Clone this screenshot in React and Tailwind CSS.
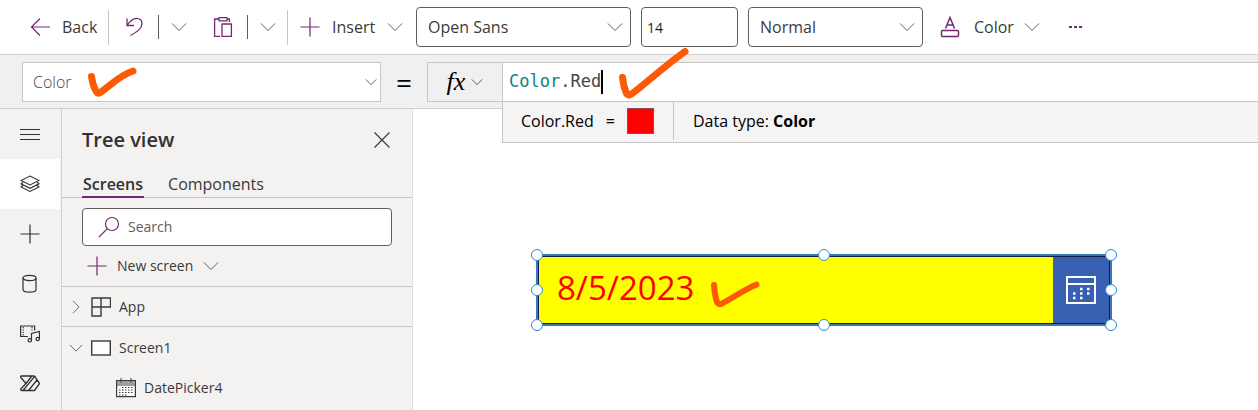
import React from 'react';
import clsx from 'clsx';

const Icon = ({ className, children, viewBox = '0 0 20 20' }) => (
  <svg viewBox={viewBox} className={clsx('shrink-0', className)} fill="none" stroke="currentColor" aria-hidden="true">
    {children}
  </svg>
);

const Chevron = ({ className = 'h-4 w-4 text-[#605e5c]' }) => (
  <Icon viewBox="0 0 16 16" className={className}>
    <path d="M1 4.500l7 7 7-7" />
  </Icon>
);

const PlusIcon = ({ className }) => (
  <Icon className={className}>
    <path d="M0.5 10h19M10 0.5v19" strokeWidth="1.2" />
  </Icon>
);

const Tick = ({ className, viewBox, d, width }) => (
  <svg viewBox={viewBox} className={clsx('pointer-events-none absolute z-20', className)} fill="none" aria-hidden="true">
    <path d={d} stroke="#fd5a05" strokeWidth={width} strokeLinecap="round" strokeLinejoin="round" />
  </svg>
);

const MenuIcon = () => (
  <Icon className="h-5 w-5">
    <path d="M0 5.500h20M0 10.500h20M0 15.500h20" />
  </Icon>
);

const LayersIcon = () => (
  <Icon className="h-5 w-5">
    <path d="M10 2l9 4.5-9 4.5-9-4.5z" strokeWidth="1.1" />
    <path d="M3 8.2L1 9.8l9 4.500 9-4.500-2-1.600M3 11.500L1 13l9 4.500 9-4.500-2-1.500" strokeWidth="1.1" />
  </Icon>
);

const DataIcon = () => (
  <Icon className="h-5 w-5">
    <ellipse cx="9.5" cy="4" rx="6.5" ry="2.6" strokeWidth="1.2" />
    <path d="M3 4v11.500c0 1.500 2.900 2.600 6.500 2.600s6.500-1.100 6.500-2.600V4" strokeWidth="1.2" />
  </Icon>
);

const MediaIcon = () => (
  <Icon className="h-5 w-5">
    <path d="M8 12.500H.6V2h14v4.500" strokeWidth="1.2" />
    <path d="M3.200 3v9M12 3v4" strokeDasharray="1.200 1.200" strokeWidth="1.2" />
    <path d="M11.500 16V9.500l8-2v7.300" strokeWidth="1.2" />
    <circle cx="9.800" cy="16.300" r="1.700" strokeWidth="1.2" />
    <circle cx="17.700" cy="15" r="1.700" strokeWidth="1.2" />
  </Icon>
);

const FlowIcon = () => (
  <Icon className="h-5 w-5">
    <path
      d="M1.500 2h12.200c.8 0 1 .3 1.400.8l4.400 6.700-5 7H1.800c-1.200 0-1.400-1-.8-1.800L6 9.500.9 3.500C.4 2.800.6 2 1.500 2zM6 9.500L11.500 2.500M3 16.500L14.300 2.800M8.500 16.500l8.500-10.500"
      strokeWidth="1.3"
      strokeLinejoin="round"
    />
  </Icon>
);

const railItems = [
  { label: 'Menu', icon: <MenuIcon /> },
  { label: 'Tree view', icon: <LayersIcon />, active: true },
  { label: 'Insert', icon: <PlusIcon className="h-5 w-5" /> },
  { label: 'Data', icon: <DataIcon /> },
  { label: 'Media', icon: <MediaIcon /> },
  { label: 'Power Automate', icon: <FlowIcon /> },
];

const Toolbar = () => (
  <header className="flex h-[55px] items-center border-b border-[#d2d0ce] bg-white text-base text-[#3b3a39]">
    <button className="flex h-9 w-[108px] shrink-0 items-center gap-3 pl-[30px]">
      <Icon className="h-5 w-5 text-[#742774]">
        <path d="M20 10H1.500M10 1.500L1.500 10l8.500 8.500" strokeWidth="1.2" />
      </Icon>
      Back
    </button>
    <div className="flex h-[35px] w-[180px] shrink-0 items-center border-x border-[#c8c6c4]">
      <button aria-label="Undo" className="flex w-[49px] justify-center">
        <Icon className="h-5 w-5 text-[#742774]">
          <path d="M3 1.500v7h7M3.300 8.200C6 4 9 1.300 12.500 1.300c3.300 0 5.500 2.300 5.500 5.200 0 5-4.500 8-11.500 12" strokeWidth="1.3" />
        </Icon>
      </button>
      <button aria-label="Undo options" className="flex h-6 w-10 items-center justify-center border-l border-[#605e5c]">
        <Chevron />
      </button>
      <button aria-label="Paste" className="flex w-[49px] justify-center">
        <Icon className="h-[22px] w-5 text-[#742774]" viewBox="0 0 20 22">
          <path d="M6 3H1.600v17.400H7M14 3h2.400v3M6 1.600h8v3.200H6z" strokeWidth="1.300" strokeLinejoin="round" />
          <path d="M9 8h9.400v12.400H9z" strokeWidth="1.300" strokeLinejoin="round" />
        </Icon>
      </button>
      <button aria-label="Paste options" className="flex h-6 w-10 items-center justify-center border-l border-[#605e5c]">
        <Chevron />
      </button>
    </div>
    <button className="flex h-9 w-32 shrink-0 items-center gap-3 pl-3">
      <PlusIcon className="h-5 w-5 text-[#742774]" />
      Insert
      <Chevron />
    </button>
    <div className="flex shrink-0 items-center gap-[10px]">
      <div className="relative">
        <select aria-label="Font" className="h-10 w-[215px] appearance-none rounded-sm border border-[#605e5c] bg-white pl-[11px]">
          <option>Open Sans</option>
        </select>
        <Chevron className="pointer-events-none absolute top-3 right-2 h-4 w-4 text-[#605e5c]" />
      </div>
      <input
        aria-label="Font size"
        defaultValue="14"
        className="h-10 w-[97px] rounded-sm border border-[#605e5c] bg-white pl-[5px] text-sm text-[#201f1e]"
      />
      <div className="relative">
        <select aria-label="Font weight" className="h-10 w-[175px] appearance-none rounded-sm border border-[#605e5c] bg-white pl-[11px]">
          <option>Normal</option>
        </select>
        <Chevron className="pointer-events-none absolute top-3 right-2 h-4 w-4 text-[#605e5c]" />
      </div>
    </div>
    <button className="ml-[17px] flex h-9 shrink-0 items-center gap-[10px]">
      <Icon className="mr-1 h-[22px] w-5 text-[#742774]" viewBox="0 0 20 22">
        <path d="M5.500 12.500L10 1.500l4.500 11M7 9h6" strokeWidth="1.500" />
        <rect x="1.500" y="14.500" width="17" height="6" rx="1" strokeWidth="1.500" />
      </Icon>
      Color
      <Chevron />
    </button>
    <button aria-label="More commands" className="ml-7 flex h-9 items-center">
      <Icon className="h-4 w-4 text-[#742774]" viewBox="0 0 16 16">
        <path d="M1 8h3M6 8h3M11 8h3" strokeWidth="2" />
      </Icon>
    </button>
  </header>
);

const FormulaBar = () => (
  <div className="relative z-10 flex h-[54px] items-center border-b border-[#d2d0ce] bg-[#f0f0f0]">
    <div className="relative ml-[22px] shrink-0">
      <select
        aria-label="Property"
        className="h-10 w-[359px] appearance-none rounded-none border border-[#c8c6c4] bg-white pl-[10px] text-base font-light text-[#484644]"
      >
        <option>Color</option>
      </select>
      <Chevron className="pointer-events-none absolute top-[14px] right-1 h-3 w-3 text-[#323130]" />
      <Tick
        className="top-1 left-16 h-8 w-[52px]"
        viewBox="0 0 52 32"
        d="M5.500 10.500C6.500 17 8 22 10.500 26Q12 28.500 15 26C24 20 33 9.500 47 5"
        width="7"
      />
    </div>
    <span className="w-[46px] shrink-0 text-center text-[28px] font-medium text-black">=</span>
    <button aria-label="Function" className="flex h-10 w-[75px] shrink-0 items-center justify-center gap-[6px] border border-r-0 border-[#c8c6c4]">
      <span className="font-['Liberation_Serif',serif] text-[26px] leading-8 text-black italic">fx</span>
      <Chevron className="h-3 w-3 text-[#323130]" />
    </button>
    <div className="relative h-10 min-w-0 grow">
      <div className="flex h-10 items-center border-y border-l border-[#c8c6c4] bg-white pl-[6px] font-['DejaVu_Sans_Mono',monospace] text-[17px] text-[#484644]">
        <span className="text-[#0f8387]">Color</span>
        <span>.</span>
        <span>Red</span>
        <span className="h-6 w-[2px] bg-black" />
        <input aria-label="Formula" className="absolute inset-0 bg-transparent pl-28 outline-none" />
      </div>
      <div className="absolute inset-x-0 top-[39px] flex h-[42px] items-center border-b border-l border-[#c8c6c4] bg-[#f4f4f4] pl-[18px] text-base text-black">
        <span>Color.Red</span>
        <span className="ml-3">=</span>
        <span className="ml-3 h-[26px] w-[27px] border border-[#8a5050] bg-[#ff0000]" />
        <div className="ml-[19px] flex h-[38px] items-center border-l border-[#c8c6c4] pl-[19px]">
          <span>
            Data type: <b>Color</b>
          </span>
        </div>
        <span className="absolute inset-x-0 top-0 border-t border-[#c8c6c4]" />
      </div>
      <Tick
        className="-top-4 left-[115px] h-14 w-[76px]"
        viewBox="0 0 76 56"
        d="M5.500 31.500C6 37 7.500 43 9.500 47.500Q11 50.500 14.500 48C26 40 42 24.500 68 5.500"
        width="7"
      />
    </div>
  </div>
);

const Rail = () => (
  <nav className="w-[62px] shrink-0 border-r border-[#d2d0ce]">
    {railItems.map((item) => (
      <button
        key={item.label}
        aria-label={item.label}
        className={clsx('flex h-[50px] w-[60px] items-center justify-center text-[#323130]', item.active && 'bg-white')}
      >
        {item.icon}
      </button>
    ))}
  </nav>
);

const TreeView = () => (
  <aside className="w-[351px] shrink-0 border-r border-[#e1dfdd] text-sm text-[#3b3a39]">
    <div className="flex h-[62px] items-center justify-between pr-[22px] pl-5">
      <h2 className="text-xl font-semibold text-[#323130]">Tree view</h2>
      <button aria-label="Close">
        <Icon className="h-4 w-4" viewBox="0 0 16 16">
          <path d="M0.500 0.500l15 15M15.500 0.500l-15 15" strokeWidth="1.200" />
        </Icon>
      </button>
    </div>
    <div className="flex h-[27px] gap-6 border-b border-[#c8c6c4] pl-5 text-base leading-6">
      <button className="h-[27px] border-b-2 border-[#742774] px-px font-semibold text-[#323130]">Screens</button>
      <button className="h-[27px] border-b-2 border-transparent">Components</button>
    </div>
    <label className="mx-5 mt-[10px] flex h-[38px] items-center gap-2 rounded-sm border border-[#605e5c] bg-white pl-[15px]">
      <Icon className="h-[22px] w-[22px] text-[#742774]" viewBox="0 0 22 22">
        <circle cx="14" cy="8" r="6.500" strokeWidth="1.200" />
        <path d="M9.400 12.600L1 21" strokeWidth="1.200" />
      </Icon>
      <input aria-label="Search" placeholder="Search" className="min-w-0 grow outline-none placeholder:text-[#605e5c]" />
    </label>
    <button className="flex h-10 w-full items-center gap-[10px] pl-[25px]">
      <PlusIcon className="h-5 w-5 text-[#742774]" />
      New screen
      <Chevron />
    </button>
    <button className="flex h-10 w-full items-center gap-2 border-t border-[#c8c6c4] pl-[7px]">
      <Chevron className="h-[14px] w-[14px] -rotate-90 text-[#605e5c]" />
      <Icon className="h-5 w-5">
        <path d="M1 1h18.500v9H10v9H1zM10 1v9H1" strokeWidth="1.400" />
      </Icon>
      App
    </button>
    <button className="flex h-[42px] w-full items-center gap-2 border-t border-[#c8c6c4] pl-[7px]">
      <Chevron className="h-[14px] w-[14px] text-[#605e5c]" />
      <Icon className="h-5 w-5">
        <rect x="0.700" y="3" width="18.600" height="14" fill="white" strokeWidth="1.400" />
      </Icon>
      Screen1
    </button>
    <button className="flex h-10 w-full items-center gap-2 pl-[54px]">
      <Icon className="h-5 w-5">
        <rect x="0.600" y="2.600" width="18.800" height="16" fill="white" strokeWidth="1.200" />
        <path d="M1 4.500h18" stroke="#a19f9d" strokeWidth="3" />
        <path d="M1 7h18M5 0v4.500M15 0v4.500" />
        <path d="M6 9.500h11.500M3 12h14.500M3 14.500h14.500M3 17h9" strokeDasharray="1.500 1.500" strokeWidth="1.200" />
      </Icon>
      DatePicker4
    </button>
  </aside>
);

const handles = [
  'top-0 left-0',
  'top-0 left-1/2',
  'top-0 left-full',
  'top-1/2 left-0',
  'top-1/2 left-full',
  'top-full left-0',
  'top-full left-1/2',
  'top-full left-full',
];

const Canvas = () => (
  <main className="min-w-0 grow bg-white pt-[146px] pl-[124px]">
    <div className="relative h-[70px] w-[574px]">
      <div className="flex h-full w-full outline-2 -outline-offset-1 outline-[#3a76b8]">
        <div className="flex w-full border-2 border-[#0b1f4e]">
          <input
            aria-label="Date"
            defaultValue="8/5/2023"
            className="min-w-0 grow bg-[#ffff00] pb-1 pl-[18px] text-[33px] text-[#ff0000] outline-none"
          />
          <button aria-label="Open calendar" className="flex w-14 shrink-0 items-center justify-center bg-[#3860b2] text-white">
            <Icon className="h-[30px] w-[30px]" viewBox="0 0 30 30">
              <path d="M1 2h28v26H1zM1 9h28" strokeWidth="2" />
              <path d="M14 14h2.500M21 14h2.500M7 18.500h2.500M14 18.500h2.500M21 18.500h2.500M7 23h2.500M14 23h2.500" strokeWidth="2.500" />
            </Icon>
          </button>
        </div>
      </div>
      {handles.map((place) => (
        <span
          key={place}
          className={clsx('absolute h-3 w-3 -translate-x-1/2 -translate-y-1/2 rounded-full border border-[#2b88d8] bg-white', place)}
        />
      ))}
      <Tick
        className="top-6 left-[171px] h-8 w-14"
        viewBox="0 0 56 32"
        d="M6 6C6.500 13 7.500 19 9 23Q10.500 26 14 24.500C24 19.500 37 10 48.500 5.500"
        width="6"
      />
    </div>
  </main>
);

const App = () => (
  <div className="flex min-h-screen flex-col overflow-hidden bg-[#f3f2f1] font-['Open_Sans',sans-serif]">
    <Toolbar />
    <FormulaBar />
    <div className="flex grow">
      <Rail />
      <TreeView />
      <Canvas />
    </div>
  </div>
);

export default App;
